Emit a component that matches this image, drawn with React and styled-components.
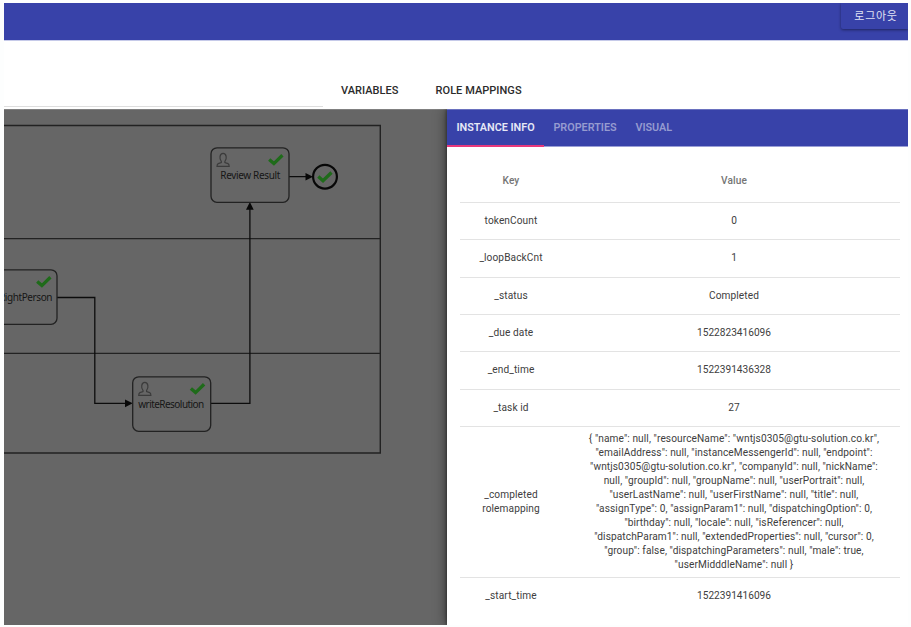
import React from "react";
import styled, { createGlobalStyle } from "styled-components";

const GlobalStyle = createGlobalStyle`
  * { box-sizing: border-box; }
  html, body { margin: 0; background: #fff; }
  body { overflow: hidden; font-family: Roboto, "Noto Sans CJK KR", sans-serif; }
`;

const Page = styled.div`
  width: 911px;
  height: 627px;
  padding: 3px 3px 2px 4px;
  display: flex;
  flex-direction: column;
  background: #fdfefe;
`;

const AppBar = styled.header`
  flex: none;
  height: 38px;
  display: flex;
  justify-content: flex-end;
  align-items: flex-start;
  overflow: hidden;
  background: #3842a9;
  border-bottom: 1px solid #c6cae9;
`;

const LogoutButton = styled.button`
  width: 67px;
  height: 26px;
  padding: 0 0 3px 3px;
  border: 0;
  border-radius: 0 0 0 2px;
  background: #3842a9;
  box-shadow: 0 1px 3px rgba(0, 0, 0, 0.45);
  color: #e0e2f4;
  font: 400 11px "Noto Sans CJK KR", sans-serif;
  letter-spacing: 0.7px;
`;

const Toolbar = styled.nav`
  flex: none;
  height: 68px;
  display: flex;
  align-items: flex-end;
  background: #fff;
`;

const FieldLine = styled.div`
  width: 319px;
  height: 1px;
  margin-bottom: 2px;
  background: #dedede;
`;

const ToolbarLink = styled.a`
  margin-left: ${(p) => p.$gap}px;
  margin-bottom: 11px;
  line-height: 14px;
  font-size: 11px;
  font-weight: 500;
  letter-spacing: 0.04px;
  color: #2b2b2b;
`;

const Workspace = styled.main`
  flex: 1;
  min-height: 0;
  display: flex;
  overflow: hidden;
`;

const Canvas = styled.section`
  width: 443px;
  background: #666;
  border-top: 1px solid #808080;
  svg { display: block; margin-top: -1px; }
`;

const TaskLabel = styled.text`
  font-family: "Noto Sans", sans-serif;
  font-size: 10px;
  fill: #161616;
`;

const Panel = styled.aside`
  flex: 1;
  display: flex;
  flex-direction: column;
  background: #fff;
  box-shadow: -1px 0 12px rgba(0, 0, 0, 0.45), -1px 0 3px rgba(0, 0, 0, 0.35);
`;

const Tabs = styled.div`
  flex: none;
  height: 38px;
  display: flex;
  background: #3842a9;
  border-top: 1px solid #6a71bf;
  border-bottom: 1px solid #9a9fd6;
`;

const Tab = styled.button`
  height: 37px;
  padding: 0 9.4px;
  border: 0;
  border-bottom: 2px solid ${(p) => (p.$active ? "#e8387c" : "transparent")};
  background: none;
  color: ${(p) => (p.$active ? "#e6e8f6" : "#969bd0")};
  font: 600 10.8px Roboto, sans-serif;
  white-space: nowrap;
`;

const Table = styled.div`
  width: 440px;
  margin: 12px 0 0 13px;
`;

const Row = styled.div`
  display: grid;
  grid-template-columns: 102px 1fr;
  align-items: center;
  height: ${(p) => p.$height || 37.33}px;
  border-bottom: ${(p) => (p.$last ? 0 : "1px solid #e3e3e3")};
  color: ${(p) => (p.$head ? "#757575" : "#404040")};
  font-size: 10.14px;
  line-height: 14px;
  font-weight: ${(p) => (p.$head ? 500 : 400)};
  letter-spacing: 0.1px;
  text-align: center;
`;

const ValueCell = styled.div`
  padding-left: 6px;
  white-space: pre-line;
  letter-spacing: ${(p) => (p.$numeric ? 0 : 0.1)}px;
`;

const mapping = `{ "name": null, "resourceName": "wntjs0305@gtu-solution.co.kr",
"emailAddress": null, "instanceMessengerId": null, "endpoint":
"wntjs0305@gtu-solution.co.kr", "companyId": null, "nickName":
null, "groupId": null, "groupName": null, "userPortrait": null,
"userLastName": null, "userFirstName": null, "title": null,
"assignType": 0, "assignParam1": null, "dispatchingOption": 0,
"birthday": null, "locale": null, "isReferencer": null,
"dispatchParam1": null, "extendedProperties": null, "cursor": 0,
"group": false, "dispatchingParameters": null, "male": true,
"userMidddleName": null }`;

const rows = [
  { key: "tokenCount", value: "0" },
  { key: "_loopBackCnt", value: "1" },
  { key: "_status", value: "Completed" },
  { key: "_due date", value: "1522823416096" },
  { key: "_end_time", value: "1522391436328" },
  { key: "_task id", value: "27" },
  { key: "_completed rolemapping", value: mapping, height: 151 },
  { key: "_start_time", value: "1522391416096", last: true, height: 36 },
];

const Check = ({ x, y }) => (
  <path
    transform={`translate(${x} ${y})`}
    d="M1.2 5.8 L5.9 10 L14.4 1.7"
    fill="none"
    stroke="#1f6b1a"
    strokeWidth="3.3"
  />
);

const Person = ({ x, y }) => (
  <path
    transform={`translate(${x} ${y})`}
    d="M4.7 8.6 C2.6 6.4 2.8 .6 6.5 .6 C10.2 .6 10.4 6.4 8.3 8.6 L8.3 9.8 L11.4 10.8 Q12.6 11.3 12.6 13.6 L.4 13.6 Q.4 11.3 1.6 10.8 L4.7 9.8 Z"
    fill="none"
    stroke="#3b3b3b"
    strokeWidth="1.2"
  />
);

const Task = ({ x, y, label, labelX, labelWidth, hidePerson }) => (
  <g>
    <rect x={x} y={y} width="78" height="54.5" rx="6" fill="none" stroke="#222" strokeWidth="1.3" />
    {!hidePerson && <Person x={x + 5.6} y={y + 5} />}
    <Check x={x + 57} y={y + 5.8} />
    <TaskLabel x={labelX} y={y + 31.2} textLength={labelWidth}>{label}</TaskLabel>
  </g>
);

const Diagram = () => (
  <svg width="443" height="516" viewBox="4 109 443 516">
    <g fill="none" stroke="#222" strokeWidth="1.4">
      <path d="M0 125.5H380.3V453H0M0 238.6H380M0 353.4H380" />
    </g>
    <g fill="none" stroke="#0c0c0c" strokeWidth="1.3">
      <path d="M57 297.5H94.8V403.3H126M210.7 403.3H249.9V209M289 176.7H307" />
    </g>
    <g fill="#080808">
      <path d="M125 399.5L132.7 403.3L125 407.2ZM246 209.8L249.9 202L253.7 209.8ZM305.5 172.9L313 176.7L305.5 180.5Z" />
    </g>
    <Task x={211} y={147.8} label="Review Result" labelX={220.3} labelWidth={60} />
    <Task x={-21} y={269.8} label="RightPerson" labelX={-1} labelWidth={53.5} hidePerson />
    <Task x={132.7} y={376.8} label="writeResolution" labelX={138.3} labelWidth={66} />
    <circle cx="325" cy="176.7" r="11.9" fill="none" stroke="#080808" strokeWidth="2.2" />
    <Check x={317.1} y={170.8} />
  </svg>
);

export default function App() {
  return (
    <>
      <GlobalStyle />
      <Page>
        <AppBar>
          <LogoutButton>로그아웃</LogoutButton>
        </AppBar>
        <Toolbar>
          <FieldLine />
          <ToolbarLink $gap={18}>VARIABLES</ToolbarLink>
          <ToolbarLink $gap={37}>ROLE MAPPINGS</ToolbarLink>
        </Toolbar>
        <Workspace>
          <Canvas>
            <Diagram />
          </Canvas>
          <Panel>
            <Tabs>
              <Tab $active>INSTANCE INFO</Tab>
              <Tab>PROPERTIES</Tab>
              <Tab>VISUAL</Tab>
            </Tabs>
            <Table>
              <Row $head $height={44}>
                <div>Key</div>
                <ValueCell>Value</ValueCell>
              </Row>
              {rows.map((row) => (
                <Row key={row.key} $height={row.height} $last={row.last}>
                  <div>{row.key}</div>
                  <ValueCell $numeric={/^\d+$/.test(row.value)}>{row.value}</ValueCell>
                </Row>
              ))}
            </Table>
          </Panel>
        </Workspace>
      </Page>
    </>
  );
}
